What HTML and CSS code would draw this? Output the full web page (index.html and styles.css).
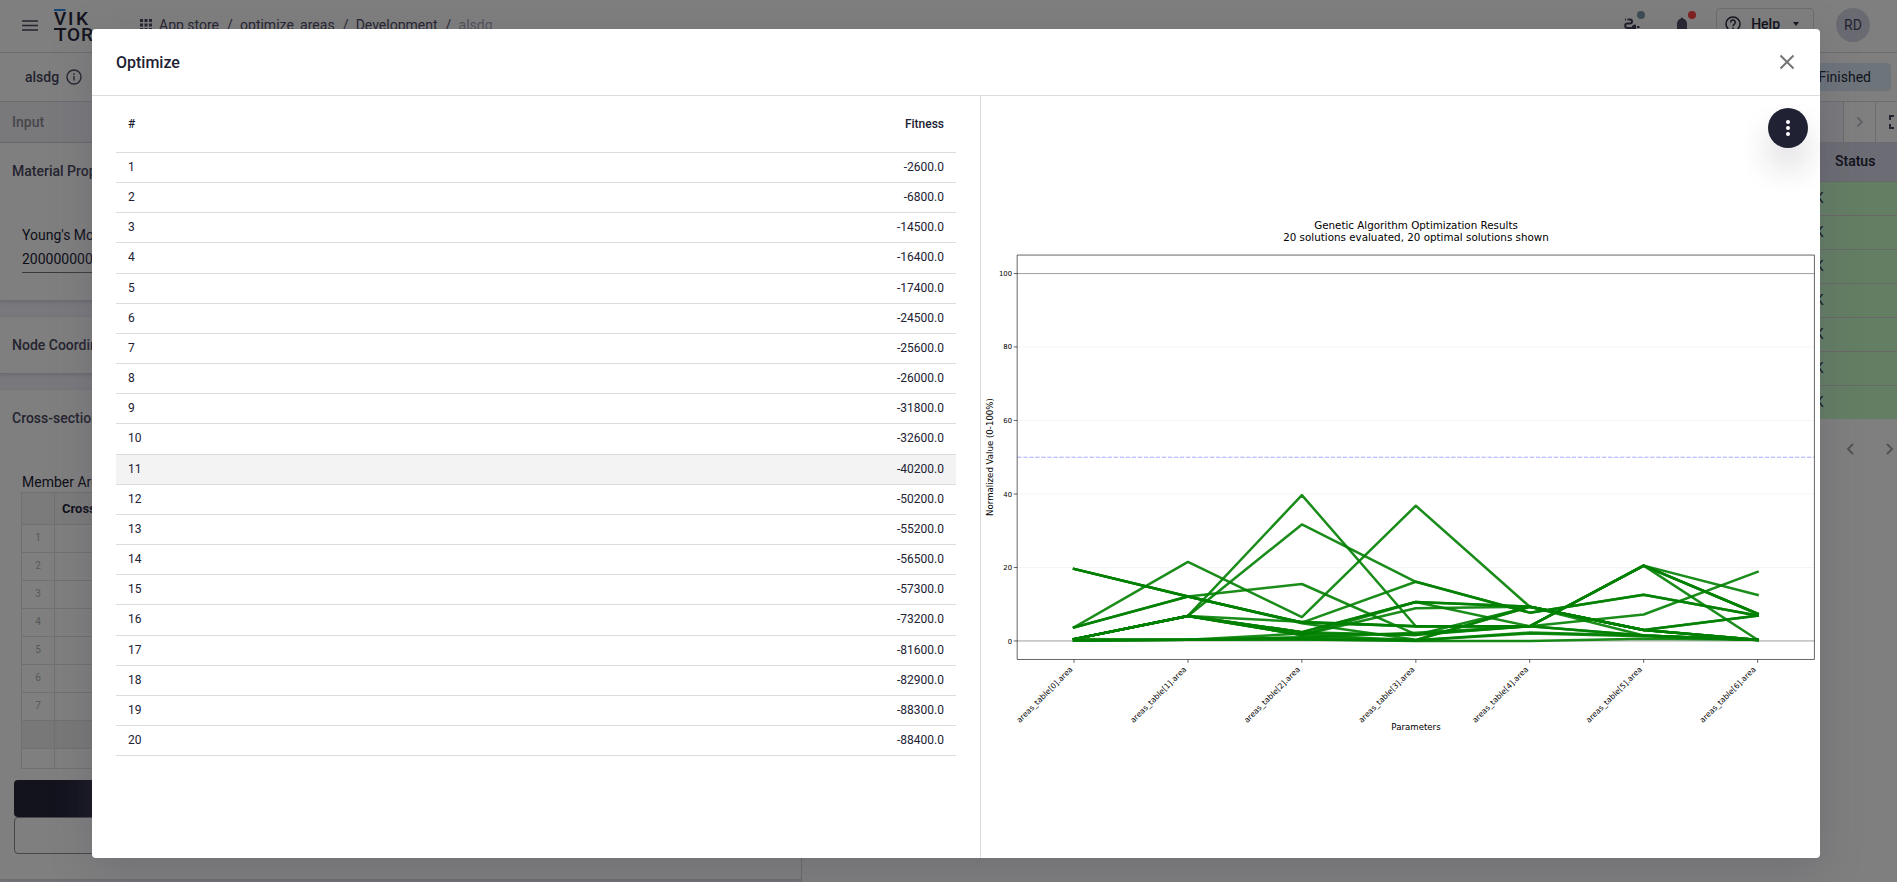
FILE: index.html
```html
<!DOCTYPE html>
<html lang="en">
<head>
<meta charset="utf-8">
<title>Optimize</title>
<link rel="stylesheet" href="styles.css">
</head>
<body>
<div class="app">
  <header class="topbar">
    <button class="icon-btn menu-btn" aria-label="Menu">
      <svg width="16" height="12" viewBox="0 0 16 12"><path d="M0 1h16M0 5.500h16M0 10h16" stroke="#4a4860" stroke-width="1.600"/></svg>
    </button>
    <svg class="logo" width="42" height="34" viewBox="0 0 42 34" role="img" aria-label="Viktor">
      <path d="M0 1h11.500" stroke="#2f8fe8" stroke-width="2"/>
      <path d="M0 20h11" stroke="#26263a" stroke-width="2"/>
      <text class="logo-text"><tspan x="0 14 22" y="16">VIK</tspan><tspan x="1 13 27" y="32">TOR</tspan></text>
    </svg>
    <nav class="crumbs" aria-label="Breadcrumb">
      <svg width="12" height="12" viewBox="0 0 12 12" fill="#4a4860"><path d="M0 0h3v3H0zM4.500 0h3v3h-3zM9 0h3v3H9zM0 4.500h3v3H0zM4.500 4.500h3v3h-3zM9 4.500h3v3H9zM0 9h3v3H0zM4.500 9h3v3h-3zM9 9h3v3H9z"/></svg>
      <a href="#">App store</a><span class="sep">/</span><a href="#">optimize_areas</a><span class="sep">/</span><a href="#">Development</a><span class="sep">/</span><span class="current">alsdg</span>
    </nav>
    <div class="top-actions">
      <button class="icon-btn badge-host" aria-label="Connection">
        <svg width="18" height="18" viewBox="0 0 18 18" fill="none" stroke="#3b3a50" stroke-width="2"><path d="M2 3.500h1M4.500 3.500H7a2 2 0 0 1 0 4H4.500a2.300 2.300 0 0 0 0 4.600H8"/><path d="M8 12.500a4 4 0 0 1 5-3.800v7.600a4 4 0 0 1-5-3.800z" fill="#3b3a50" stroke="none"/><path d="M14 11h2.500M14 14h2.500"/></svg>
        <span class="dot dot-grey"></span>
      </button>
      <button class="icon-btn badge-host" aria-label="Notifications">
        <svg width="16" height="18" viewBox="0 0 16 18" fill="#4a4860"><path d="M8 1.500c.8 0 1.300.6 1.300 1.300C12 3.500 13 5.500 13 8v5l2 2v.700H1V15l2-2V8c0-2.500 1-4.500 3.700-5.200 0-.7.5-1.300 1.300-1.300z"/></svg>
        <span class="dot dot-red"></span>
      </button>
      <button class="help-btn">
        <svg width="16" height="16" viewBox="0 0 16 16" fill="none" stroke="#26263a" stroke-width="1.500"><circle cx="8" cy="8" r="7"/><path d="M5.700 6.500a2.300 2.300 0 1 1 3.500 1.800C8.300 8.900 8 9.200 8 10.200M8 11.500v1.500"/></svg>
        Help
        <svg width="6" height="4" viewBox="0 0 6 4" fill="#26263a"><path d="M0 0h6L3 4z"/></svg>
      </button>
      <span class="avatar">RD</span>
    </div>
  </header>

  <div class="subbar">
    <strong class="entity">alsdg</strong>
    <svg width="16" height="16" viewBox="0 0 16 16" fill="none" stroke="#4a4860" stroke-width="1.400"><circle cx="8" cy="8" r="7"/><path d="M8 7v4.500M8 4.300v1.600"/></svg>
    <span class="chip">Finished</span>
  </div>

  <main class="workspace">
    <section class="inputs">
      <div class="panel-title">Input</div>
      <div class="cards">
        <section class="card card-material">
          <h2>Material Properties</h2>
          <label class="field">Young's Modulus<input type="text" value="200000000000"></label>
        </section>
        <section class="card card-nodes"><h2>Node Coordinates</h2></section>
        <section class="card card-cross">
          <h2>Cross-sections</h2>
          <p class="table-label">Member Areas</p>
          <table class="grid">
            <thead><tr><th class="num"></th><th>Cross-section</th></tr></thead>
            <tbody>
              <tr><td class="num">1</td><td></td></tr>
              <tr><td class="num">2</td><td></td></tr>
              <tr><td class="num">3</td><td></td></tr>
              <tr><td class="num">4</td><td></td></tr>
              <tr><td class="num">5</td><td></td></tr>
              <tr><td class="num">6</td><td></td></tr>
              <tr><td class="num">7</td><td></td></tr>
              <tr class="shade"><td></td><td></td></tr>
              <tr class="last"><td></td><td></td></tr>
            </tbody>
          </table>
          <div class="form-actions">
            <button class="btn-dark" aria-label="Run"></button>
            <button class="btn-line" aria-label="Clear"></button>
          </div>
        </section>
      </div>
    </section>

    <section class="results">
      <div class="tabs">
        <div class="tab-fill"></div>
        <button class="tab-btn tab-next" aria-label="Next view"><svg width="8" height="12" viewBox="0 0 8 12" fill="none" stroke="#c4c4d0" stroke-width="1.800"><path d="M1.500 1.500L6 6l-4.500 4.500"/></svg></button>
        <button class="tab-btn tab-full" aria-label="Full screen"><svg width="14" height="14" viewBox="0 0 14 14" fill="none" stroke="#4a4860" stroke-width="2"><path d="M5 1H1v4M1 9v4h4M9 1h4v4M13 9v4H9"/></svg></button>
      </div>
      <table class="status">
        <thead><tr><th>Status</th></tr></thead>
        <tbody><tr><td>OK</td></tr><tr><td>OK</td></tr><tr><td>OK</td></tr><tr><td>OK</td></tr><tr><td>OK</td></tr><tr><td>OK</td></tr><tr><td>OK</td></tr></tbody>
      </table>
      <div class="pager">
        <button class="icon-btn" aria-label="Previous page"><svg width="8" height="12" viewBox="0 0 8 12" fill="none" stroke="#a4a4a4" stroke-width="2"><path d="M7 1L2 6l5 5"/></svg></button>
        <button class="icon-btn" aria-label="Next page"><svg width="8" height="12" viewBox="0 0 8 12" fill="none" stroke="#a4a4a4" stroke-width="2"><path d="M1 1l5 5-5 5"/></svg></button>
      </div>
    </section>
  </main>

  <div class="overlay">
    <div class="modal" role="dialog" aria-labelledby="dialog-title">
      <header class="modal-head">
        <h1 id="dialog-title">Optimize</h1>
        <button class="icon-btn" aria-label="Close"><svg width="16" height="16" viewBox="0 0 16 16" stroke="#757575" stroke-width="2"><path d="M1.500 1.500l13 13M14.500 1.500l-13 13"/></svg></button>
      </header>
      <div class="modal-body">
        <div class="list">
          <table class="fitness">
            <thead><tr><th>#</th><th>Fitness</th></tr></thead>
            <tbody>
              <tr><td>1</td><td>-2600.0</td></tr>
              <tr><td>2</td><td>-6800.0</td></tr>
              <tr><td>3</td><td>-14500.0</td></tr>
              <tr><td>4</td><td>-16400.0</td></tr>
              <tr><td>5</td><td>-17400.0</td></tr>
              <tr><td>6</td><td>-24500.0</td></tr>
              <tr><td>7</td><td>-25600.0</td></tr>
              <tr><td>8</td><td>-26000.0</td></tr>
              <tr><td>9</td><td>-31800.0</td></tr>
              <tr><td>10</td><td>-32600.0</td></tr>
              <tr class="active"><td>11</td><td>-40200.0</td></tr>
              <tr><td>12</td><td>-50200.0</td></tr>
              <tr><td>13</td><td>-55200.0</td></tr>
              <tr><td>14</td><td>-56500.0</td></tr>
              <tr><td>15</td><td>-57300.0</td></tr>
              <tr><td>16</td><td>-73200.0</td></tr>
              <tr><td>17</td><td>-81600.0</td></tr>
              <tr><td>18</td><td>-82900.0</td></tr>
              <tr><td>19</td><td>-88300.0</td></tr>
              <tr><td>20</td><td>-88400.0</td></tr>
            </tbody>
          </table>
        </div>
        <div class="view">
          <svg class="chart" viewBox="0 0 974 608" role="img" aria-label="Genetic Algorithm Optimization Results">
            <g class="title"><text x="505" y="16">Genetic Algorithm Optimization Results</text><text x="505" y="30">20 solutions evaluated, 20 optimal solutions shown</text></g>
            <g class="gridlines"><path d="M42 409.200H967.500M42 323.900H967.500M42 238.500H967.500M42 153.200H967.500"/></g>
            <path class="bound" d="M42 494.500H967.500M42 68H967.500"/>
            <path class="middle" d="M42 281.200H967.500"/>
            <g class="series" stroke-width="2.500" transform="translate(108 494.500) scale(132.260 -4.266)">
              <polyline points="0,3.7 1,21.5 2,6.5 3,36.8 4,9.3 5,3 6,0.3"/>
              <polyline points="0,0.5 1,6.8 2,39.7 3,4 4,4 5,20.5 6,12.5"/>
              <polyline points="0,0.5 1,6.8 2,31.7 3,16.1 4,7.7 5,12.6 6,6.9"/>
              <polyline points="0,3.7 1,12.1 2,15.5 3,1.8 4,4 5,7.2 6,18.8"/>
              <polyline points="0,19.6 1,12.1 2,5 3,16.1 4,7.7 5,12.6 6,6.9"/>
              <polyline points="0,19.6 1,12.1 2,5 3,4 4,4 5,20.5 6,7.4"/>
              <polyline points="0,19.6 1,12.1 2,4.8 3,0.3 4,9.3 5,3 6,6.9"/>
              <polyline points="0,3.7 1,12.1 2,5 3,4 4,4 5,20.5 6,7.4"/>
              <polyline points="0,0.5 1,6.8 2,2.4 3,10.6 4,9.3 5,3 6,0.3"/>
              <polyline points="0,0.5 1,6.8 2,2.4 3,10.6 4,4 5,1.5 6,0.3"/>
              <polyline points="0,0.5 1,6.8 2,1.6 3,10.6 4,9.3 5,1.5 6,0.3"/>
              <polyline points="0,0.5 1,6.8 2,5.2 3,4 4,4 5,20.5 6,0.3"/>
              <polyline points="0,0.5 1,6.8 2,2.4 3,1.6 4,4 5,20.5 6,7.4"/>
              <polyline points="0,0.5 1,6.8 2,1.6 3,8.9 4,9.3 5,3 6,6.9"/>
              <polyline points="0,0.1 1,0.3 2,2 3,1.6 4,9.3 5,3 6,0.3"/>
              <polyline points="0,0.5 1,0.3 2,1 3,2.2 4,4 5,1.5 6,0.3"/>
              <polyline points="0,0.1 1,0.3 2,0.9 3,0.2 4,2.3 5,1.5 6,0.3"/>
              <polyline points="0,0.1 1,0.3 2,0.4 3,0 4,0 5,0.6 6,0.3"/>
              <polyline points="0,0.1 1,0.3 2,0.4 3,0.2 4,9.3 5,3 6,0.3"/>
              <polyline points="0,0.5 1,6.8 2,1.6 3,0.2 4,2 5,1.3 6,0.3"/>
            </g>
            <path class="frame" d="M42 46.500H967.500V516H42z"/>
            <path class="frame" d="M38 494.500h4M38 409.200h4M38 323.900h4M38 238.500h4M38 153.200h4M38 68h4M108 516v4M240.300 516v4M372.500 516v4M504.800 516v4M637 516v4M769.300 516v4M901.600 516v4"/>
            <g class="yticks"><text x="36" y="498">0</text><text x="36" y="412">20</text><text x="36" y="327">40</text><text x="36" y="241">60</text><text x="36" y="156">80</text><text x="36" y="71">100</text></g>
            <g class="xticks">
              <text transform="translate(107 528) rotate(-45)">areas_table[0].area</text>
              <text transform="translate(239 528) rotate(-45)">areas_table[1].area</text>
              <text transform="translate(371 528) rotate(-45)">areas_table[2].area</text>
              <text transform="translate(504 528) rotate(-45)">areas_table[3].area</text>
              <text transform="translate(636 528) rotate(-45)">areas_table[4].area</text>
              <text transform="translate(768 528) rotate(-45)">areas_table[5].area</text>
              <text transform="translate(900 528) rotate(-45)">areas_table[6].area</text>
            </g>
            <g class="axis-label"><text x="505" y="598">Parameters</text><text transform="translate(14 281) rotate(-90)">Normalized Value (0-100%)</text></g>
          </svg>
          <button class="fab" aria-label="More options"><svg width="4" height="16" viewBox="0 0 4 16" fill="#fff"><circle cx="2" cy="2" r="2"/><circle cx="2" cy="8" r="2"/><circle cx="2" cy="14" r="2"/></svg></button>
        </div>
      </div>
    </div>
  </div>
</div>
</body>
</html>
```
FILE: styles.css
```css
* { box-sizing: border-box; }
html, body { height: 100%; margin: 0; overflow: hidden; }
body { font-family: Roboto, "Liberation Sans", sans-serif; font-size: 14px; color: #212134; }
button { font: inherit; color: inherit; padding: 0; cursor: pointer; }
h1, h2, p { margin: 0; }
a { color: inherit; text-decoration: none; }

.app { position: relative; width: calc(100% + 15px); height: 100vh; display: flex; flex-direction: column; background: #fff; }
.icon-btn { display: flex; border: 0; background: none; }

.topbar { display: flex; align-items: flex-start; height: 53px; padding: 8px 42px 0 22px; border-bottom: 1px solid #d8d8de; }
.menu-btn { padding-top: 12px; }
.logo { margin: 1px 0 0 16px; overflow: visible; }
.logo-text { font-size: 19px; font-weight: 500; fill: #26263a; }
.crumbs { display: flex; align-items: center; gap: 9px; margin-left: 44px; padding-top: 8px; line-height: 18px; color: #4a4860; }
.crumbs svg { margin-right: -2px; }
.crumbs .sep { width: 5px; margin: 0 -1px; text-align: center; }
.crumbs .current { color: #a5a5b4; }
.top-actions { display: flex; align-items: flex-start; margin-left: auto; }
.badge-host { position: relative; padding-top: 8px; margin-right: 33px; }
.badge-host + .badge-host { margin-right: 26px; }
.dot { position: absolute; top: 3px; right: -4px; width: 8px; height: 8px; border-radius: 50%; }
.dot-grey { background: #7b98a8; }
.dot-red { background: #ff4040; right: -6px; }
.help-btn { display: flex; align-items: center; gap: 10px; height: 34px; padding: 0 14px 2px 8px; margin-right: 22px; border: 1px solid #d8d8de; border-radius: 4px; background: none; font-weight: 500; }
.help-btn svg:last-child { margin-left: 3px; }
.avatar { width: 34px; height: 34px; border-radius: 50%; background: #d5d5e4; color: #4a4860; line-height: 34px; text-align: center; }

.subbar { display: flex; align-items: center; height: 49px; padding: 0 21px 0 25px; border-bottom: 1px solid #d8d8de; color: #4a4860; }
.subbar svg { margin-left: 7px; }
.entity { font-weight: 500; font-size: 14px; }
.chip { margin-left: auto; padding: 0 20px; line-height: 28px; border-radius: 4px; background: #dbe9f5; color: #26263a; }

.workspace { flex: 1; display: flex; min-height: 0; }
.inputs { width: 802px; border-right: 1px solid #d0d0d4; background: #f2f2fa; overflow: hidden; }
.panel-title { height: 41px; padding-left: 12px; line-height: 40px; font-weight: 500; color: #8c8c96; border-bottom: 1px solid #d8d8de; background: #f2f2f8; }
.cards { display: flex; flex-direction: column; gap: 16px; }
.card { background: #fff; border-bottom: 1px solid #d8d8de; box-shadow: 0 1px 4px rgba(33,33,52,.15); }
.card h2 { padding: 0 12px; font-size: 14px; font-weight: 500; line-height: 56px; color: #4a4860; }
.card-material { padding-bottom: 27px; }
.field { display: block; margin: 26px 22px 0; line-height: 20px; }
.field input { display: block; width: 100%; height: 28px; padding: 0; border: 0; border-bottom: 1px solid #757575; background: none; font: inherit; color: inherit; }
.card-cross { padding-bottom: 25px; }
.table-label { margin: 26px 22px 0; line-height: 20px; }
.grid { width: 760px; margin-left: 21px; border-collapse: collapse; }
.grid th, .grid td { height: 28px; padding: 0; border: 1px solid #e0e0e0; }
.grid th { height: 32px; padding-left: 7px; background: #f7f7f7; font-size: 13px; font-weight: 700; text-align: left; }
.grid .num { width: 33px; padding: 0 0 2px; font-size: 10px; text-align: center; color: #b0b0b0; }
.grid .shade td { background: #f0f0f0; }
.grid .last td { height: 20px; }
.form-actions { display: flex; flex-direction: column; margin: 11px 14px 0; }
.btn-dark, .btn-line { height: 37px; border-radius: 4px; }
.btn-dark { border: 0; background: #26263c; }
.btn-line { border: 1px solid #8c8c96; background: #fff; }

.results { flex: 1; background: #fff; }
.tabs { display: flex; height: 41px; border-bottom: 1px solid #d8d8de; }
.tab-fill { flex: 1; background: #f2f2fa; }
.tab-btn { display: flex; align-items: center; justify-content: center; border: 0; border-left: 1px solid #d8d8de; background: #fff; }
.tab-next { width: 32px; }
.tab-full { width: 37px; padding-left: 4px; }
.status { width: 100%; border-collapse: collapse; text-align: left; }
.status th { height: 38px; padding: 0 0 2px 1033px; background: #d8d8e8; font-weight: 500; }
.status td { height: 34px; padding: 0 0 0 1003px; border-top: 1px solid #d0d0d0; background: #c8fcc8; }
.pager { display: flex; justify-content: flex-end; gap: 32px; padding: 24px 18px 0 0; }

.overlay { position: absolute; inset: 0; display: flex; padding: 29px 92px 24px; background: rgba(0,0,0,.5); }
.modal { flex: 1; display: flex; flex-direction: column; border-radius: 4px; background: #fff; box-shadow: 0 11px 40px rgba(80,80,100,.3); }
.modal-head { display: flex; align-items: center; justify-content: space-between; height: 67px; padding: 0 25px 0 24px; border-bottom: 1px solid #dcdcdc; }
.modal-head h1 { font-size: 16px; font-weight: 500; }
.modal-body { flex: 1; display: grid; grid-template-columns: 889fr 839fr; min-height: 0; }
.list { padding: 0 24px; border-right: 1px solid #dcdcdc; }
.fitness { width: 100%; border-spacing: 0; font-size: 12px; line-height: 1.43; }
.fitness th { padding: 16px 12px; line-height: 24px; font-weight: 500; text-align: left; border-bottom: 1px solid #dcdcdc; }
.fitness td { padding: 6px 12px; border-bottom: 1px solid #dcdcdc; }
.fitness th:last-child, .fitness td:last-child { text-align: right; }
.fitness .active { background: #f3f3f3; }
.view { position: relative; display: flex; align-items: center; }
.fab { position: absolute; top: 12px; right: 12px; width: 40px; height: 40px; display: flex; align-items: center; justify-content: center; border: 0; border-radius: 50%; background: #212134; box-shadow: 0 20px 32px rgba(33,33,52,.16); }

.chart { width: 100%; height: auto; font-family: "DejaVu Sans", sans-serif; fill: #000; }
.chart path { fill: none; }
.title { font-size: 12px; text-anchor: middle; }
.axis-label { font-size: 10px; text-anchor: middle; }
.yticks { font-size: 8px; text-anchor: end; }
.xticks { font-size: 9px; text-anchor: end; }
.gridlines { stroke: #f3f3f3; }
.bound { stroke: #000; stroke-opacity: .45; }
.middle { stroke: #00f; stroke-opacity: .4; stroke-dasharray: 5 2; }
.frame { stroke: #000; stroke-opacity: .7; }
.series polyline { fill: none; stroke: #008000; stroke-opacity: .9; vector-effect: non-scaling-stroke; stroke-linecap: square; stroke-linejoin: round; }
```
